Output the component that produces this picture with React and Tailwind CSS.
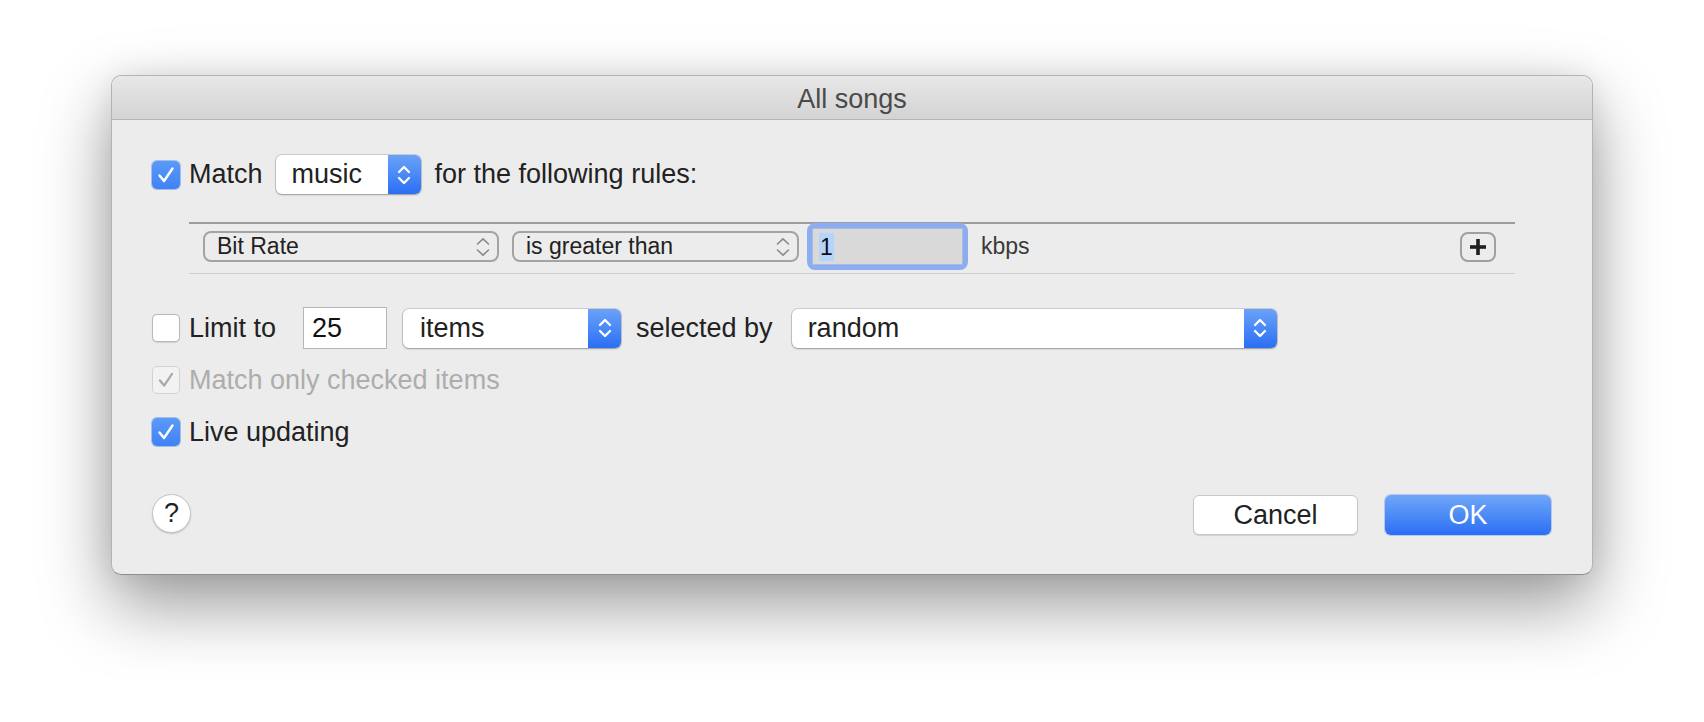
import React from "react";

const FONT = { fontFamily: '"Liberation Sans", Arial, sans-serif' };

function Check({ color = "#ffffff" }) {
  return (
    <svg width="28" height="28" viewBox="0 0 28 28" className="block">
      <path d="M7.5 14.5 L12 20 L20.5 7.5" fill="none" stroke={color} strokeWidth="2.4" strokeLinecap="round" strokeLinejoin="round" />
    </svg>
  );
}

function Checkbox({ state }) {
  if (state === "on") {
    return (
      <div className="w-[28px] h-[28px] rounded-[5px] bg-gradient-to-b from-[#5b9af9] to-[#3f82f4] shadow-[0_0_0_1px_rgba(40,100,220,0.35)] shrink-0">
        <Check />
      </div>
    );
  }
  if (state === "disabled") {
    return (
      <div className="w-[28px] h-[28px] rounded-[5px] bg-[#f2f2f2] border border-[#d2d2d2] shrink-0 flex items-center justify-center">
        <svg width="26" height="26" viewBox="0 0 28 28" className="block">
          <path d="M7.5 14.5 L12 20 L20.5 7.5" fill="none" stroke="#a9a9a9" strokeWidth="2.4" strokeLinecap="round" strokeLinejoin="round" />
        </svg>
      </div>
    );
  }
  return <div className="w-[28px] h-[28px] rounded-[5px] bg-white border border-[#b8b8b8] shadow-[0_0.5px_1px_rgba(0,0,0,0.12)] shrink-0" />;
}

function BluePopup({ width, label, textPad = 16 }) {
  return (
    <div
      className="h-[39px] flex rounded-[6px] bg-white shadow-[0_0_0_1px_rgba(0,0,0,0.13),0_1px_2px_rgba(0,0,0,0.25)] overflow-hidden shrink-0"
      style={{ width }}
    >
      <div className="flex-1 flex items-center text-[27px] text-[#222]" style={{ paddingLeft: textPad }}>
        {label}
      </div>
      <div className="w-[33px] h-full bg-gradient-to-b from-[#6aa2f8] to-[#2a6ef3] flex items-center justify-center">
        <svg width="16" height="26" viewBox="0 0 16 26" className="block">
          <path d="M3 10 L8 5 L13 10" fill="none" stroke="#fff" strokeWidth="2.3" strokeLinecap="round" strokeLinejoin="round" />
          <path d="M3 16 L8 21 L13 16" fill="none" stroke="#fff" strokeWidth="2.3" strokeLinecap="round" strokeLinejoin="round" />
        </svg>
      </div>
    </div>
  );
}

function RulePopup({ width, label }) {
  return (
    <div
      className="h-[31px] rounded-[8px] border-2 border-[#a3a3a3] flex items-center pl-[12px] pr-[7px] shrink-0"
      style={{ width }}
    >
      <span className="flex-1 text-[23px] text-[#222] leading-none">{label}</span>
      <svg width="14" height="20" viewBox="0 0 14 20" className="block">
        <path d="M1.5 7 L7 1.8 L12.5 7" fill="none" stroke="#8a8a8a" strokeWidth="1.6" strokeLinecap="round" strokeLinejoin="round" />
        <path d="M1.5 13 L7 18.2 L12.5 13" fill="none" stroke="#8a8a8a" strokeWidth="1.6" strokeLinecap="round" strokeLinejoin="round" />
      </svg>
    </div>
  );
}

export default function App() {
  return (
    <div className="w-[1704px] h-[722px] bg-white pt-[75px] pl-[111px]" style={FONT}>
      <div className="w-[1482px] h-[500px] rounded-[10px] border border-[#b3b3b3] border-b-[#8e8e8e] bg-[#ececec] shadow-[0_30px_70px_rgba(0,0,0,0.4),0_0_30px_rgba(0,0,0,0.08)] overflow-hidden flex flex-col">
        {/* title bar */}
        <div className="h-[44px] shrink-0 border-b border-[#b4b4b4] bg-gradient-to-b from-[#e8e8e8] to-[#d3d3d3] flex items-center justify-center pt-[3px]">
          <span className="text-[27px] text-[#4a4a4a] leading-none">All songs</span>
        </div>

        <div className="flex flex-col pl-[40px] pr-[40px]">
          {/* Match row */}
          <div className="mt-[35px] h-[39px] flex items-center">
            <Checkbox state="on" />
            <span className="ml-[9px] text-[27px] text-[#222]">Match</span>
            <div className="ml-[13px]">
              <BluePopup width={145} label="music" />
            </div>
            <span className="ml-[14px] text-[27px] text-[#222]">for the following rules:</span>
          </div>

          {/* rule box */}
          <div className="mt-[28px] ml-[37px] w-[1326px] border-t-2 border-t-[#9c9c9c] border-b border-b-[#cdcdcd] pt-[7px] pb-[11px] pl-[14px] pr-[19px]">
            <div className="h-[31px] flex items-center">
              <RulePopup width={296} label="Bit Rate" />
              <div className="ml-[13px]">
                <RulePopup width={287} label="is greater than" />
              </div>
              <div className="ml-[8px] w-[161px] h-[47px] rounded-[8px] border-[5px] border-[#8dadf1] shrink-0">
                <div className="w-full h-full bg-[#d9d9d9] border border-[#a7bbe6] flex items-center pl-[6px]">
                  <span className="bg-[#b4d4fc] text-[23px] text-[#111] leading-[28px] px-[1px]">1</span>
                </div>
              </div>
              <span className="ml-[13px] text-[23px] leading-none text-[#3a3a3a]">kbps</span>
              <div className="ml-auto w-[36px] h-[30px] rounded-[8px] border-2 border-[#a0a0a0] flex items-center justify-center">
                <svg width="18" height="18" viewBox="0 0 18 18" className="block">
                  <rect x="7.2" y="1" width="3.6" height="16" fill="#1f1f1f" />
                  <rect x="1" y="7.2" width="16" height="3.6" fill="#1f1f1f" />
                </svg>
              </div>
            </div>
          </div>

          {/* Limit row */}
          <div className="mt-[33px] h-[42px] flex items-center">
            <Checkbox state="off" />
            <span className="ml-[9px] text-[27px] text-[#222]">Limit to</span>
            <div className="ml-[27px] w-[84px] h-[42px] bg-white border border-[#b6b6b6] flex items-center pl-[8px] text-[27px] text-[#111] shrink-0">
              25
            </div>
            <div className="ml-[16px]">
              <BluePopup width={218} label="items" textPad={17} />
            </div>
            <span className="ml-[15px] text-[27px] text-[#222]">selected by</span>
            <div className="ml-[19px]">
              <BluePopup width={485} label="random" />
            </div>
          </div>

          {/* Match only checked */}
          <div className="mt-[17px] h-[28px] flex items-center">
            <Checkbox state="disabled" />
            <span className="ml-[9px] text-[27px] text-[#adadad]">Match only checked items</span>
          </div>

          {/* Live updating */}
          <div className="mt-[24px] h-[28px] flex items-center">
            <Checkbox state="on" />
            <span className="ml-[9px] text-[27px] text-[#222]">Live updating</span>
          </div>

          {/* footer */}
          <div className="mt-[49px] h-[40px] flex items-center">
            <div className="-mt-[4px] w-[39px] h-[39px] rounded-full bg-white border border-[#c4c4c4] shadow-[0_1px_1.5px_rgba(0,0,0,0.18)] flex items-center justify-center text-[27px] text-[#222]">
              ?
            </div>
            <div className="ml-auto mr-[1px] flex items-center gap-[27px]">
              <div className="w-[165px] h-[40px] rounded-[6px] bg-white border border-[#c8c8c8] shadow-[0_1px_1px_rgba(0,0,0,0.12)] flex items-center justify-center text-[27px] text-[#222]">
                Cancel
              </div>
              <div className="w-[166px] h-[40px] rounded-[6px] bg-gradient-to-b from-[#6fa6f8] to-[#2b6ef4] shadow-[0_0_0_1px_rgba(30,90,220,0.25)] flex items-center justify-center text-[27px] text-white">
                OK
              </div>
            </div>
          </div>
        </div>
      </div>
    </div>
  );
}
